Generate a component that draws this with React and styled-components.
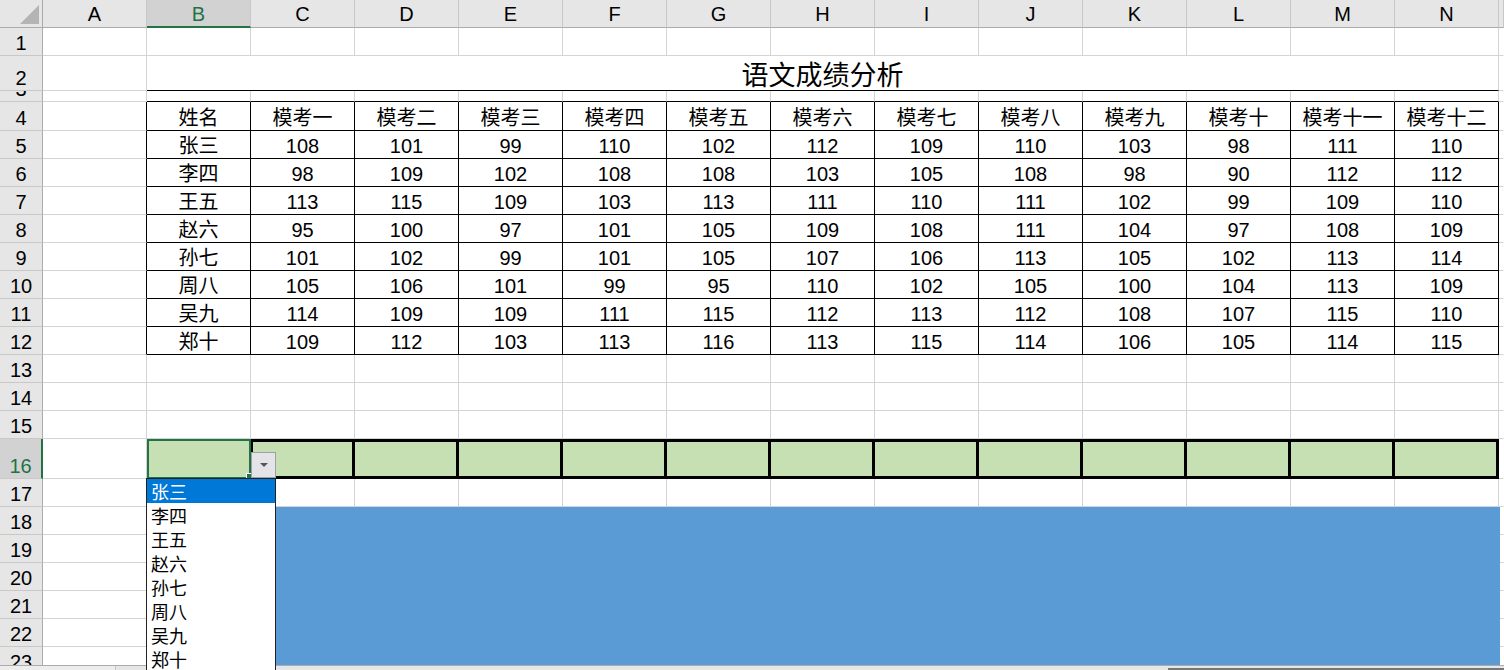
import React from 'react';
import styled, { createGlobalStyle } from 'styled-components';

const GlobalStyle = createGlobalStyle`
  html, body { margin: 0; padding: 0; background: #fff; }
  body { font-family: "Liberation Sans", "Noto Sans CJK SC", sans-serif; color: #000; }
`;

const GRID = '#D4D4D4';
const GREEN = '#217346';
const COLS = ['A', 'B', 'C', 'D', 'E', 'F', 'G', 'H', 'I', 'J', 'K', 'L', 'M', 'N'];
const EXAMS = ['模考一', '模考二', '模考三', '模考四', '模考五', '模考六', '模考七', '模考八', '模考九', '模考十', '模考十一', '模考十二'];
const DATA = [
  ['张三', 108, 101, 99, 110, 102, 112, 109, 110, 103, 98, 111, 110],
  ['李四', 98, 109, 102, 108, 108, 103, 105, 108, 98, 90, 112, 112],
  ['王五', 113, 115, 109, 103, 113, 111, 110, 111, 102, 99, 109, 110],
  ['赵六', 95, 100, 97, 101, 105, 109, 108, 111, 104, 97, 108, 109],
  ['孙七', 101, 102, 99, 101, 105, 107, 106, 113, 105, 102, 113, 114],
  ['周八', 105, 106, 101, 99, 95, 110, 102, 105, 100, 104, 113, 109],
  ['吴九', 114, 109, 109, 111, 115, 112, 113, 112, 108, 107, 115, 110],
  ['郑十', 109, 112, 103, 113, 116, 113, 115, 114, 106, 105, 114, 115],
];

const Root = styled.div`
  position: relative;
  width: 1504px;
  height: 670px;
  overflow: hidden;
  background: #fff;
`;

const Sheet = styled.div`
  height: 665px;
  overflow: hidden;
`;

const Row = styled.div`
  display: flex;
  height: ${p => p.$h}px;
`;

const Corner = styled.div`
  width: 43px;
  flex: none;
  box-sizing: border-box;
  background: #E6E6E6;
  border-right: 1px solid #ABABAB;
  border-bottom: 1px solid #ABABAB;
  display: flex;
  align-items: flex-end;
  justify-content: flex-end;
  padding: 0 3px 3px 0;
`;

const ColHead = styled.div`
  width: ${p => p.$w || 104}px;
  flex: ${p => (p.$fill ? 1 : 'none')};
  box-sizing: border-box;
  background: ${p => (p.$active ? '#D2D2D2' : '#E6E6E6')};
  color: ${p => (p.$active ? GREEN : '#000')};
  border-right: 1px solid #C8C8C8;
  border-bottom: ${p => (p.$active ? `2px solid ${GREEN}` : '1px solid #ABABAB')};
  display: flex;
  align-items: flex-end;
  justify-content: center;
  padding-bottom: ${p => (p.$active ? 0 : 1)}px;
  font-size: 20px;
  line-height: 23px;
`;

const RowHead = styled.div`
  width: 43px;
  flex: none;
  box-sizing: border-box;
  overflow: hidden;
  background: ${p => (p.$active ? '#D2D2D2' : '#E6E6E6')};
  color: ${p => (p.$active ? GREEN : '#000')};
  border-right: ${p => (p.$active ? `2px solid ${GREEN}` : '1px solid #ABABAB')};
  border-bottom: 1px solid #C8C8C8;
  display: flex;
  align-items: flex-end;
  justify-content: center;
  font-size: 20px;
  line-height: 23px;
`;

const Cell = styled.div`
  width: ${p => p.$w || 104}px;
  flex: ${p => (p.$fill ? 1 : 'none')};
  box-sizing: border-box;
  overflow: hidden;
  border-right: 1px solid ${p => p.$r || GRID};
  border-bottom: 1px solid ${p => p.$b || GRID};
  display: flex;
  align-items: flex-end;
  justify-content: center;
  font-size: ${p => p.$size || 20}px;
  line-height: ${p => (p.$size ? p.$size : 23)}px;
  white-space: nowrap;
`;

const SelectedCell = styled.div`
  width: 104px;
  flex: none;
  box-sizing: border-box;
  background: #C6E0B4;
  box-shadow: inset 0 0 0 2px ${GREEN};
`;

const ThickCell = styled.div`
  width: 104px;
  flex: none;
  box-sizing: border-box;
  background: #C6E0B4;
  border-top: 3px solid #000;
  border-bottom: 3px solid #000;
  border-right: 3px solid #000;
  border-left: ${p => (p.$first ? '2px solid #000' : 'none')};
`;

const FillHandle = styled.div`
  position: absolute;
  left: 246px;
  top: 473px;
  width: 5px;
  height: 5px;
  background: ${GREEN};
  border: 1px solid #fff;
  z-index: 2;
`;

const DropButton = styled.div`
  position: absolute;
  left: 251px;
  top: 452px;
  width: 25px;
  height: 26px;
  box-sizing: border-box;
  background: #E4E4E8;
  border: 1px solid #A0A0A0;
  display: flex;
  align-items: center;
  justify-content: center;
  z-index: 4;
  &::after {
    content: '';
    border-left: 4px solid transparent;
    border-right: 4px solid transparent;
    border-top: 4px solid #555;
  }
`;

const DropList = styled.div`
  position: absolute;
  left: 146px;
  top: 478px;
  width: 130px;
  height: 200px;
  box-sizing: border-box;
  background: #fff;
  border: 1px solid #222;
  z-index: 3;
`;

const DropItem = styled.div`
  height: 24px;
  line-height: 24px;
  padding-left: 4px;
  font-size: 18px;
  font-family: "Noto Sans CJK SC", sans-serif;
  background: ${p => (p.$selected ? '#0078D7' : 'transparent')};
  color: ${p => (p.$selected ? '#fff' : '#000')};
`;

const ChartBlock = styled.div`
  position: absolute;
  left: 275px;
  top: 507px;
  width: 1225px;
  height: 158px;
  background: #5B9BD5;
  z-index: 2;
`;

const BottomBar = styled.div`
  display: flex;
  height: 5px;
  background: #E6E6E6;
  border-top: 1px solid #ABABAB;
  box-sizing: border-box;
`;

const TabArea = styled.div`
  width: 115px;
  border-right: 1px solid #C8C8C8;
  background: #EDEDED;
`;

const Gap = styled.div`
  width: 1052px;
`;

const ScrollThumb = styled.div`
  flex: 1;
  border-top: 2px solid #777;
  margin-top: 2px;
`;

function CornerTriangle() {
  return (
    <svg width="19" height="19" viewBox="0 0 19 19">
      <polygon points="19,0 19,19 0,19" fill="#B4B4B4" />
    </svg>
  );
}

function BlankRow({ h, n, bottom }) {
  return (
    <Row $h={h}>
      <RowHead>{n}</RowHead>
      {COLS.map(c => (
        <Cell key={c} $b={bottom && c !== 'A' ? '#000' : undefined} />
      ))}
      <Cell $fill $r="transparent" $b={GRID} />
    </Row>
  );
}

export default function App() {
  return (
    <Root>
      <GlobalStyle />
      <Sheet>
        <Row $h={28}>
          <Corner><CornerTriangle /></Corner>
          {COLS.map(c => (
            <ColHead key={c} $active={c === 'B'}>{c}</ColHead>
          ))}
          <ColHead $fill />
        </Row>

        <BlankRow h={28} n={1} />

        <Row $h={35}>
          <RowHead>2</RowHead>
          <Cell />
          <Cell $w={104 * 13} $b="#000" $size={27}>语文成绩分析</Cell>
          <Cell $fill $r="transparent" />
        </Row>

        <BlankRow h={11} n={3} bottom />

        <Row $h={29}>
          <RowHead>4</RowHead>
          <Cell $r="#000" />
          <Cell $r="#000" $b="#000">姓名</Cell>
          {EXAMS.map(e => (
            <Cell key={e} $r="#000" $b="#000">{e}</Cell>
          ))}
          <Cell $fill $r="transparent" />
        </Row>

        {DATA.map((row, i) => (
          <Row $h={28} key={row[0]}>
            <RowHead>{i + 5}</RowHead>
            <Cell $r="#000" />
            {row.map((v, j) => (
              <Cell key={j} $r="#000" $b="#000">{v}</Cell>
            ))}
            <Cell $fill $r="transparent" />
          </Row>
        ))}

        {[13, 14, 15].map(n => (
          <BlankRow key={n} h={28} n={n} />
        ))}

        <Row $h={40}>
          <RowHead $active>16</RowHead>
          <Cell />
          <SelectedCell />
          {EXAMS.map((e, i) => (
            <ThickCell key={e} $first={i === 0} />
          ))}
          <Cell $fill $r="transparent" />
        </Row>

        {[17, 18, 19, 20, 21, 22, 23].map(n => (
          <BlankRow key={n} h={28} n={n} />
        ))}
      </Sheet>

      <BottomBar>
        <TabArea />
        <Gap />
        <ScrollThumb />
      </BottomBar>

      <FillHandle />
      <DropButton />
      <DropList>
        {DATA.map((row, i) => (
          <DropItem key={row[0]} $selected={i === 0}>{row[0]}</DropItem>
        ))}
      </DropList>
      <ChartBlock />
    </Root>
  );
}
